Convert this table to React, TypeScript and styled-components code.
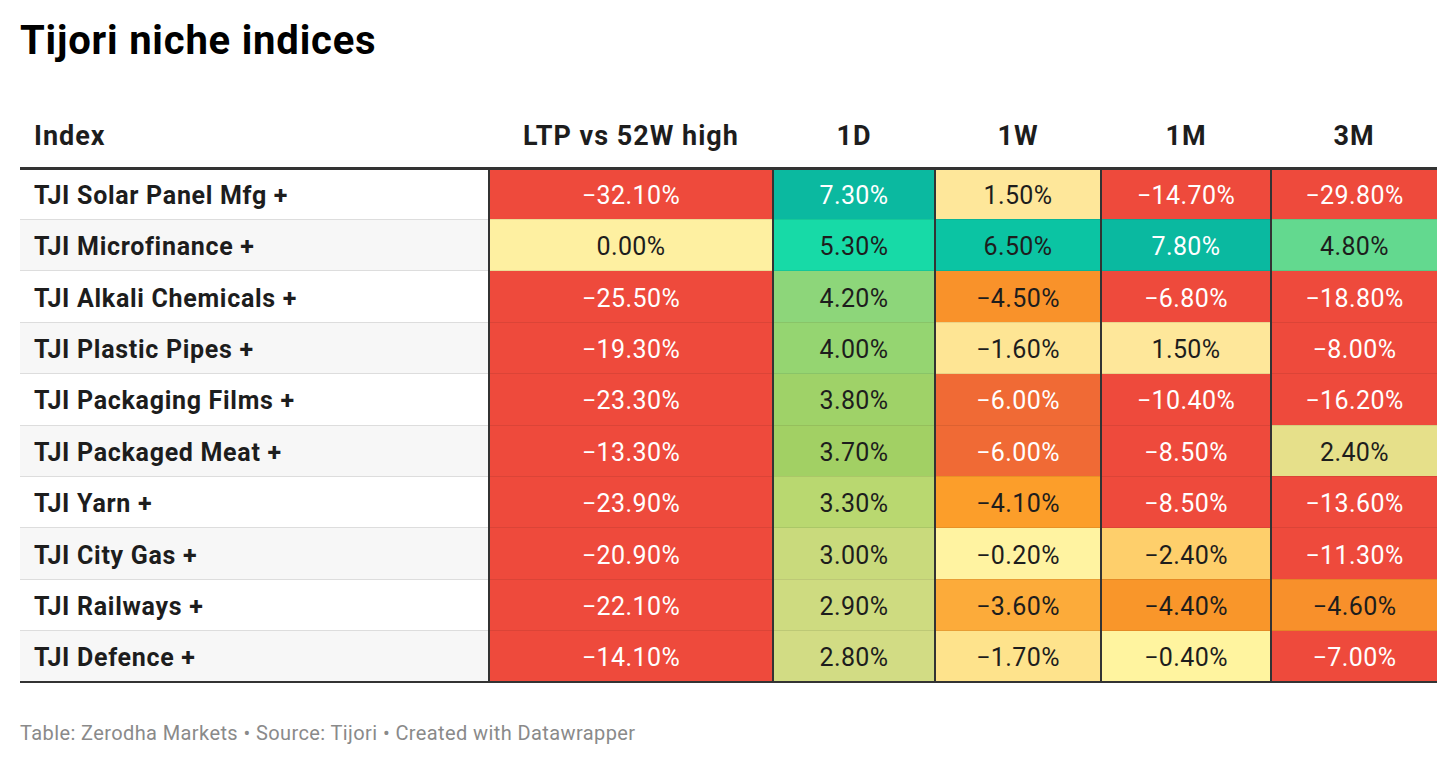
import React from "react";
import styled, { createGlobalStyle } from "styled-components";

const Global = createGlobalStyle`
  html, body { margin: 0; padding: 0; background: #ffffff; }
  body { font-family: Roboto, "Liberation Sans", sans-serif; color: #1d1d1d; }
`;

const Page = styled.div`
  padding: 18px 0 0 20px;
  width: 1417px;
`;

const Title = styled.h1`
  margin: 0;
  font-size: 40px;
  line-height: 45.6px;
  font-weight: 700;
  color: #000;
  letter-spacing: 0.8px;
`;

const Table = styled.table`
  margin-top: 36px;
  width: 1417px;
  border-collapse: collapse;
  table-layout: fixed;
  border-bottom: 2px solid #333;
`;

const HeadCell = styled.th<{ $align?: "left" | "center" }>`
  height: 62px;
  padding: 5px 14px 0;
  text-align: ${(p) => p.$align ?? "center"};
  font-size: 27px;
  letter-spacing: 1px;
  font-weight: 700;
  color: #1d1d1d;
  border-bottom: 3px solid #333;
  vertical-align: middle;
  white-space: nowrap;
`;

const Row = styled.tr<{ $alt: boolean }>`
  height: 51.4px;
  background: ${(p) => (p.$alt ? "#f7f7f7" : "#ffffff")};
`;

const LabelCell = styled.td<{ $last: boolean }>`
  padding: 3px 14px 0;
  font-size: 25px;
  letter-spacing: 0.7px;
  font-weight: 700;
  color: #1d1d1d;
  border-bottom: ${(p) => (p.$last ? "none" : "1px solid #dddddd")};
  white-space: nowrap;
`;

const ValueCell = styled.td<{ $bg: string; $light: boolean; $edge: boolean; $last: boolean }>`
  padding: 3px 0 0;
  text-align: center;
  font-size: 25px;
  letter-spacing: 0.4px;
  font-weight: 400;
  background: ${(p) => p.$bg};
  color: ${(p) => (p.$light ? "#ffffff" : "#1d1d1d")};
  border-left: ${(p) => (p.$edge ? "2px solid #333" : "none")};
  border-bottom: ${(p) => (p.$last ? "none" : "1px solid rgba(0,0,0,0.08)")};
`;

const Footer = styled.div`
  margin-top: 38px;
  font-size: 20px;
  letter-spacing: 0.4px;
  line-height: 24px;
  color: #8a8a8a;
`;

type Cell = [string, string, boolean];

const RED = "#ee4a3c";

const rows: { name: string; cells: Cell[] }[] = [
  {
    name: "TJI Solar Panel Mfg +",
    cells: [
      ["\u221232.10%", RED, true],
      ["7.30%", "#0bb9a0", true],
      ["1.50%", "#fee79a", false],
      ["\u221214.70%", RED, true],
      ["\u221229.80%", RED, true],
    ],
  },
  {
    name: "TJI Microfinance +",
    cells: [
      ["0.00%", "#fef0a1", false],
      ["5.30%", "#17daa7", false],
      ["6.50%", "#0bc4a3", false],
      ["7.80%", "#0ab9a0", true],
      ["4.80%", "#63d98f", false],
    ],
  },
  {
    name: "TJI Alkali Chemicals +",
    cells: [
      ["\u221225.50%", RED, true],
      ["4.20%", "#8dd67a", false],
      ["\u22124.50%", "#f9922a", false],
      ["\u22126.80%", RED, true],
      ["\u221218.80%", RED, true],
    ],
  },
  {
    name: "TJI Plastic Pipes +",
    cells: [
      ["\u221219.30%", RED, true],
      ["4.00%", "#95d571", false],
      ["\u22121.60%", "#fee594", false],
      ["1.50%", "#fee79a", false],
      ["\u22128.00%", RED, true],
    ],
  },
  {
    name: "TJI Packaging Films +",
    cells: [
      ["\u221223.30%", RED, true],
      ["3.80%", "#9fd268", false],
      ["\u22126.00%", "#f06a35", true],
      ["\u221210.40%", RED, true],
      ["\u221216.20%", RED, true],
    ],
  },
  {
    name: "TJI Packaged Meat +",
    cells: [
      ["\u221213.30%", RED, true],
      ["3.70%", "#a2d064", false],
      ["\u22126.00%", "#f06a35", true],
      ["\u22128.50%", RED, true],
      ["2.40%", "#e6e08a", false],
    ],
  },
  {
    name: "TJI Yarn +",
    cells: [
      ["\u221223.90%", RED, true],
      ["3.30%", "#b9d870", false],
      ["\u22124.10%", "#fc9e2a", false],
      ["\u22128.50%", RED, true],
      ["\u221213.60%", RED, true],
    ],
  },
  {
    name: "TJI City Gas +",
    cells: [
      ["\u221220.90%", RED, true],
      ["3.00%", "#c9da7c", false],
      ["\u22120.20%", "#fff3a1", false],
      ["\u22122.40%", "#fecf6b", false],
      ["\u221211.30%", RED, true],
    ],
  },
  {
    name: "TJI Railways +",
    cells: [
      ["\u221222.10%", RED, true],
      ["2.90%", "#cedb80", false],
      ["\u22123.60%", "#fcab3a", false],
      ["\u22124.40%", "#f9962a", false],
      ["\u22124.60%", "#f8902b", false],
    ],
  },
  {
    name: "TJI Defence +",
    cells: [
      ["\u221214.10%", RED, true],
      ["2.80%", "#d2dc84", false],
      ["\u22121.70%", "#fee38c", false],
      ["\u22120.40%", "#fff49f", false],
      ["\u22127.00%", RED, true],
    ],
  },
];

const headers = ["LTP vs 52W high", "1D", "1W", "1M", "3M"];
const widths = [469, 284, 162, 166, 170, 166];

export default function App() {
  return (
    <Page>
      <Global />
      <Title>Tijori niche indices</Title>
      <Table>
        <colgroup>
          {widths.map((w, i) => (
            <col key={i} style={{ width: w }} />
          ))}
        </colgroup>
        <thead>
          <tr>
            <HeadCell $align="left">Index</HeadCell>
            {headers.map((h) => (
              <HeadCell key={h}>{h}</HeadCell>
            ))}
          </tr>
        </thead>
        <tbody>
          {rows.map((r, ri) => {
            const last = ri === rows.length - 1;
            return (
              <Row key={r.name} $alt={ri % 2 === 1}>
                <LabelCell $last={last}>{r.name}</LabelCell>
                {r.cells.map(([v, bg, light], ci) => (
                  <ValueCell key={ci} $bg={bg} $light={light} $edge={true} $last={last}>
                    {v}
                  </ValueCell>
                ))}
              </Row>
            );
          })}
        </tbody>
      </Table>
      <Footer>Table: Zerodha Markets • Source: Tijori • Created with Datawrapper</Footer>
    </Page>
  );
}
